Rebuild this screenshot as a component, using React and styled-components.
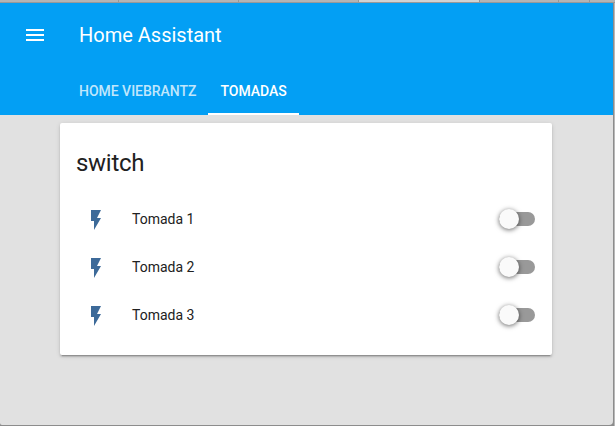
import React from "react";
import styled, { createGlobalStyle } from "styled-components";

const GlobalStyle = createGlobalStyle`
  * { box-sizing: border-box; }
  body {
    margin: 0;
    background: #b4b4b4;
    font-family: Roboto, sans-serif;
    -webkit-font-smoothing: antialiased;
    overflow: hidden;
  }
`;

const Screen = styled.div`
  width: 615px;
  height: 426px;
  display: flex;
  flex-direction: column;
  background: linear-gradient(90deg, #8c8c8c 0 614px, #b8b8b8 614px);
`;

const BrowserTabs = styled.div`
  display: flex;
  height: 3px;
  flex: none;
  border-bottom: 1px solid #999;
  background: #b4b4b4;
`;

const BrowserTab = styled.div`
  width: ${(p) => p.$width}px;
  height: 2px;
  border-right: 1px solid #969696;
  background: ${(p) => (p.$active ? "#d2d2d2" : "#b4b4b4")};
`;

const Page = styled.div`
  width: 613px;
  height: 422px;
  display: flex;
  flex-direction: column;
  background: #e1e1e1;
  border-radius: 0 0 4px 2px;
  overflow: hidden;
`;

const Header = styled.header`
  height: 112px;
  flex: none;
  background: #039ff4;
  color: #fff;
`;

const Toolbar = styled.div`
  height: 64px;
  padding-left: 23px;
  display: flex;
  align-items: center;
`;

const MenuIcon = styled.svg`
  width: 24px;
  height: 24px;
  fill: currentColor;
`;

const AppTitle = styled.h1`
  margin: 0 0 0 32px;
  font-size: 20px;
  font-weight: 400;
  line-height: 24px;
`;

const Tabs = styled.nav`
  display: flex;
  height: 48px;
  padding-left: 67px;
`;

const Tab = styled.div`
  padding: 0 12px;
  height: 48px;
  line-height: 48px;
  font-size: 14px;
  font-weight: 500;
  letter-spacing: -0.02px;
  white-space: nowrap;
  color: ${(p) => (p.$active ? "#fff" : "rgba(255,255,255,.76)")};
  box-shadow: ${(p) => (p.$active ? "inset 0 -2px #fff" : "none")};
`;

const Card = styled.section`
  width: 492px;
  height: 232px;
  margin: 8px 0 0 60px;
  padding: 24px 16px 16px;
  background: #fff;
  border-radius: 2px;
  box-shadow: 0 2px 2px 0 rgba(0,0,0,.14), 0 1px 5px 0 rgba(0,0,0,.12),
    0 3px 1px -2px rgba(0,0,0,.2);
`;

const CardTitle = styled.h2`
  margin: 0 0 16px;
  height: 32px;
  line-height: 32px;
  font-size: 24px;
  font-weight: 400;
  letter-spacing: -0.288px;
  color: #212121;
`;

const Row = styled.div`
  display: flex;
  align-items: center;
  height: 48px;
  padding-left: 8px;
`;

const FlashIcon = styled.svg`
  width: 24px;
  height: 24px;
  margin-top: 2px;
  fill: #3d6a99;
`;

const Name = styled.span`
  flex: 1;
  margin-left: 24px;
  font-size: 14px;
  line-height: 20px;
  color: #212121;
`;

const Toggle = styled.div`
  width: 36px;
  height: 14px;
  margin-right: 1px;
  border-radius: 7px;
  background: #999;
  display: flex;
  align-items: center;
`;

const Knob = styled.div`
  width: 20px;
  height: 20px;
  flex: none;
  border-radius: 50%;
  background: #fafafa;
  box-shadow: 0 1px 5px 0 rgba(0,0,0,.6);
`;

const browserTabs = [
  { width: 119 },
  { width: 120 },
  { width: 120 },
  { width: 121, active: true },
  { width: 79 },
  { width: 31 },
];

const switches = ["Tomada 1", "Tomada 2", "Tomada 3"];

export default function App() {
  return (
    <Screen>
      <GlobalStyle />
      <BrowserTabs>
        {browserTabs.map((t, i) => (
          <BrowserTab key={i} $width={t.width} $active={t.active} />
        ))}
      </BrowserTabs>
      <Page>
        <Header>
          <Toolbar>
            <MenuIcon viewBox="0 0 24 24">
              <path d="M3 18h18v-2H3v2zm0-5h18v-2H3v2zm0-7v2h18V6H3z" />
            </MenuIcon>
            <AppTitle>Home Assistant</AppTitle>
          </Toolbar>
          <Tabs>
            <Tab>HOME VIEBRANTZ</Tab>
            <Tab $active>TOMADAS</Tab>
          </Tabs>
        </Header>
        <Card>
          <CardTitle>switch</CardTitle>
          {switches.map((name) => (
            <Row key={name}>
              <FlashIcon viewBox="0 0 24 24">
                <path d="M7 2v11h3v9l7-12h-4l4-8z" />
              </FlashIcon>
              <Name>{name}</Name>
              <Toggle>
                <Knob />
              </Toggle>
            </Row>
          ))}
        </Card>
      </Page>
    </Screen>
  );
}
